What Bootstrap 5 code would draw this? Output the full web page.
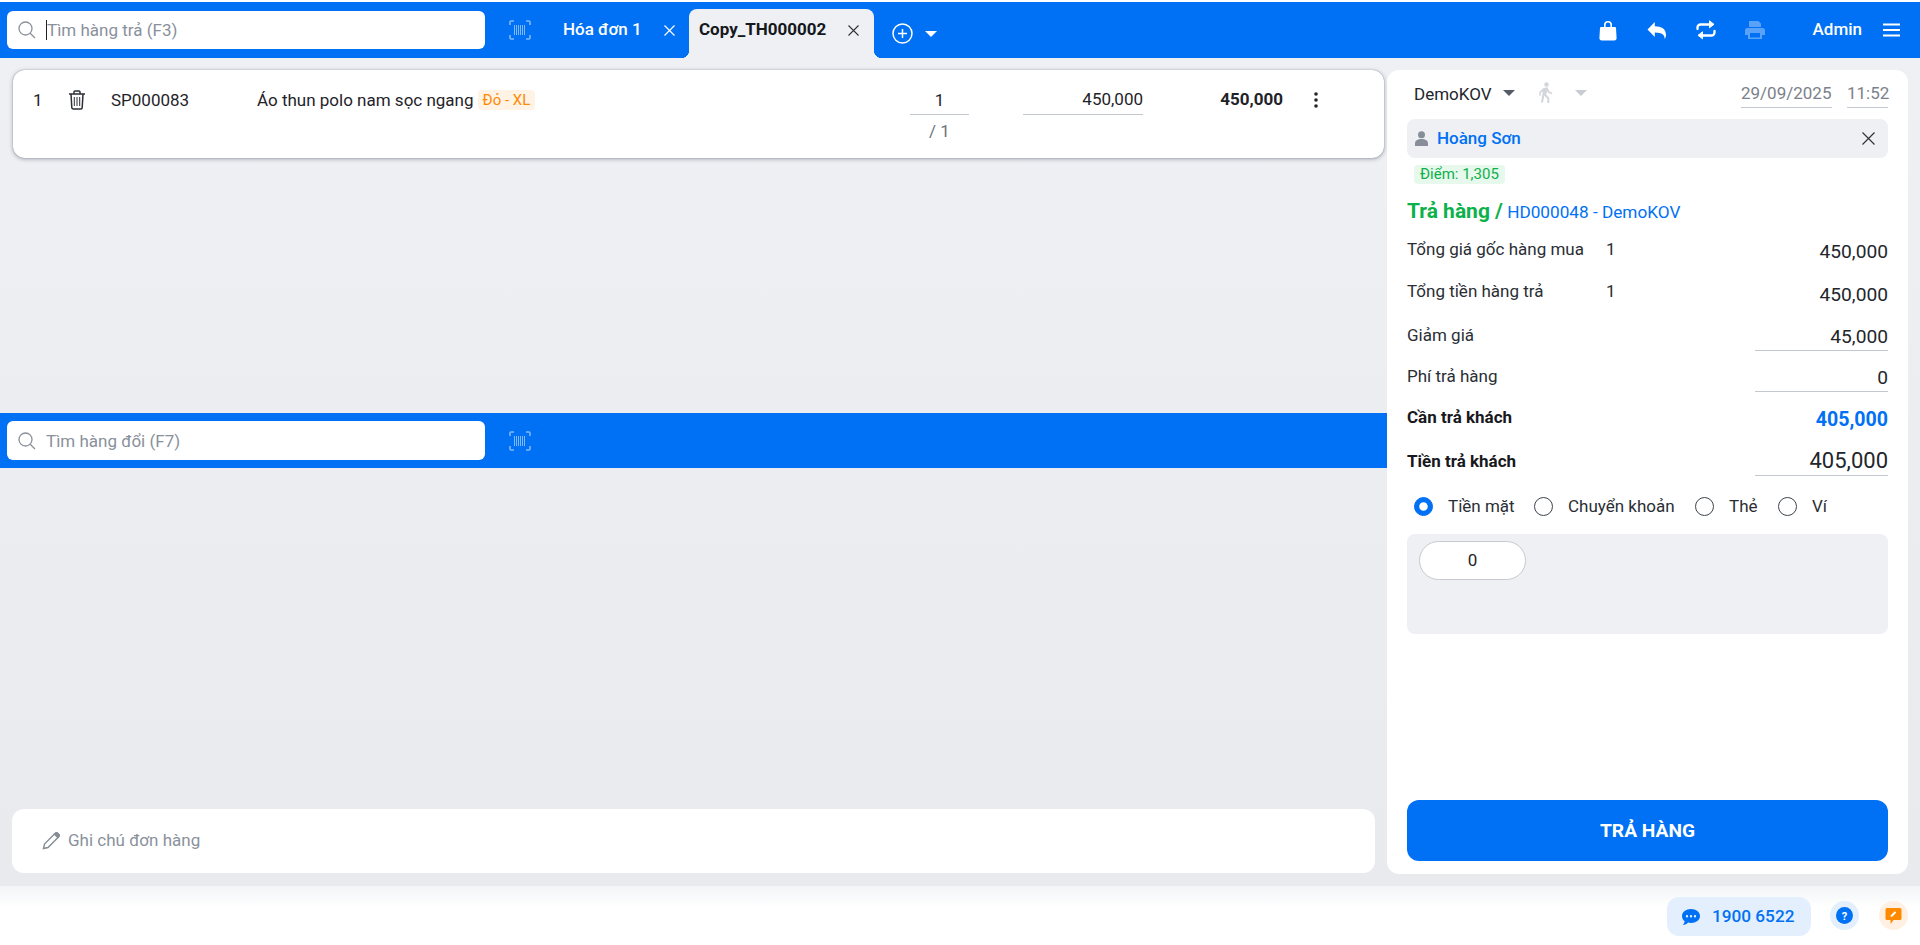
<!DOCTYPE html>
<html lang="vi">
<head>
<meta charset="utf-8">
<title>Trả hàng</title>
<link href="https://cdn.jsdelivr.net/npm/bootstrap@5.3.0/dist/css/bootstrap.min.css" rel="stylesheet">
<style>
:root{--kv-blue:#0070f4;--kv-soft:#eef0f3;--kv-line:#c3c8d0;--kv-ink:#1f2329;--kv-mute:#89909b}
html,body{height:945px;overflow:hidden}
body{font-family:Roboto,"Liberation Sans",sans-serif;font-size:17px;color:var(--kv-ink);background:#fff;padding-top:2px;display:flex;flex-direction:column}
.kv-top{height:56px;background:var(--kv-blue);flex:none;padding-left:7px}
.kv-search{width:478px;height:38px;background:#fff;border-radius:6px;padding-left:10px;color:var(--kv-mute);flex:none}
.kv-search .ph{margin-left:9px;font-size:17px;padding-top:1px}
.kv-top>.kv-search{margin-top:9px}
.kv-caret{width:1px;height:20px;background:#222;margin-left:9px}
.kv-caret+.ph{margin-left:0}
.kv-scan{margin-left:24px;flex:none;opacity:.5}
.kv-tab1{color:#fff;font-weight:500;margin-left:32px;width:126px;height:49px;margin-top:7px;line-height:41px;flex:none}
.kv-tab2{position:relative;width:185px;height:49px;margin-top:7px;background:var(--kv-soft);border-radius:8px 8px 0 0;font-weight:700;line-height:41px;padding-left:10px;flex:none;color:#15181c}
.kv-tab2::before,.kv-tab2::after{content:"";position:absolute;bottom:0;width:8px;height:8px}
.kv-tab2::before{left:-8px;background:radial-gradient(circle at 0 0,var(--kv-blue) 8px,var(--kv-soft) 8.5px)}
.kv-tab2::after{right:-8px;background:radial-gradient(circle at 100% 0,var(--kv-blue) 8px,var(--kv-soft) 8.5px)}
.kv-x{flex:none}
.kv-tab1 .kv-x{margin-left:22px}
.kv-tab2 .kv-x{margin-left:22px}
.kv-add{margin-left:18px;margin-top:7px;flex:none}
.kv-tri{width:0;height:0;border-left:6px solid transparent;border-right:6px solid transparent;border-top:6px solid #fff;flex:none}
.kv-add+.kv-tri{margin-left:12px;margin-top:7px}
.kv-tools{margin-left:auto;padding-right:20px;color:#fff}
.kv-tools svg{flex:none;display:block}
.kv-admin{font-weight:500;margin-left:48px;margin-right:21px}
.kv-gap{gap:29px}
.kv-main{height:828px;flex:none;background:linear-gradient(#eef0f3,#e8eaee)}
.kv-left{width:1387px;flex:none}
.kv-listzone{height:355px;padding:12px 3px 0 13px;flex:none}
.kv-item{height:88px;background:#fff;border-radius:12px;box-shadow:0 0 1px rgba(40,50,70,.5),0 1px 4px rgba(40,50,70,.4);position:relative;padding-top:14px;color:#1f2329}
.kv-item .c1{margin-left:20px;width:35px;flex:none;padding-top:4px}
.kv-item .c2{width:43px;flex:none;padding-top:2px}
.kv-item .c3{width:146px;flex:none;padding-top:4px}
.kv-item .c4{width:653px;flex:none;padding-top:4px}
.kv-tag{display:inline-block;background:#fff3e6;color:#ff8a00;font-size:15px;border-radius:4px;padding:0 5px;line-height:20px;margin-left:4px;vertical-align:1px}
.kv-qty{width:59px;flex:none;text-align:center;margin-right:54px}
.kv-qty .v{border-bottom:1px solid var(--kv-line);height:31px;line-height:24px;padding-top:4px}
.kv-qty .s{color:#6d737c;margin-top:5px;line-height:22px}
.kv-price{width:120px;flex:none;text-align:right;border-bottom:1px solid var(--kv-line);height:31px;line-height:24px;padding-top:3px}
.kv-total{width:140px;flex:none;text-align:right;font-weight:700;padding-top:3px}
.kv-dots{margin-left:31px;margin-top:8px;flex:none}
.kv-bar2{height:55px;background:var(--kv-blue);padding:8px 0 0 7px;flex:none}
.kv-bar2 .kv-search{height:39px}
.kv-bar2 .ph{padding-top:2px;margin-left:9px}
.kv-note{height:64px;background:#fff;border-radius:12px;margin:0 12px 13px 12px;padding-left:30px;color:#8a919c;flex:none;margin-top:auto}
.kv-note span{margin-left:8px}
.kv-panel{width:521px;height:804px;margin-top:12px;background:#fff;border-radius:12px;padding:0 20px;flex:none}
.kv-phead{height:38px;padding-top:12px}
.kv-store{margin-left:7px;color:#22262c}
.kv-tri.dk{border-top-color:#555c67;margin-left:11px}
.kv-tri.lt{border-top-color:#c8ccd2}
.kv-dt{border-bottom:1px solid var(--kv-line);color:#7b818a;height:26px;line-height:23px;white-space:nowrap}
.kv-cust{height:39px;margin-top:11px;background:var(--kv-soft);border-radius:8px;padding:0 13px 0 8px}
.kv-cust a{color:var(--kv-blue);font-weight:500;text-decoration:none;margin-left:9px}
.kv-pts{display:inline-block;background:#e7f8ec;color:#0db14b;font-size:15px;border-radius:4px;line-height:19px;padding:0 6px;margin:7px 0 0 7px;height:19px;vertical-align:top}
.kv-ptline{height:26px}
.kv-title{margin-top:15px;height:24px;line-height:24px;color:var(--kv-blue);font-size:17.2px}
.kv-title b{color:#0cb14b;font-size:21px;font-weight:700}
.kv-lines{margin-top:14px}
.kv-row{display:flex;align-items:flex-start;line-height:24px;color:#2a2e34}
.kv-row .lb{width:199px;flex:none}
.kv-row .val{margin-left:auto;font-size:19.2px;line-height:24px;padding-top:3px;color:#22262c}
.kv-row .val.low{padding-top:4px}
.kv-row .val.ln{width:133px;text-align:right;border-bottom:1px solid var(--kv-line);padding-top:2px;height:28px}
.kv-h42{height:42px}.kv-h44{height:44px}.kv-h41{height:41px}
.kv-row b{font-weight:700;color:#17191d}
.kv-row .val.blue{color:var(--kv-blue);font-weight:700;font-size:19.6px}
.kv-row .val.big{font-size:22px;padding-top:0;height:27px}
.kv-pay{height:20px;margin-top:6px;padding-left:7px;line-height:20px}
.kv-pay .form-check-input{width:19px;height:19px;margin:0;flex:none;border:1px solid #3d434b;background-color:#fff}
.kv-pay .form-check-input:checked{background-color:var(--kv-blue);border-color:var(--kv-blue)}
.kv-pay label{margin-left:15px;color:#2a2e34;white-space:nowrap}
.kv-pay .m1{width:86px}.kv-pay .m2{width:127px}.kv-pay .m3{width:49px}
.kv-box{height:100px;margin-top:18px;background:var(--kv-soft);border-radius:8px;padding:7px 12px}
.kv-pill{width:107px;height:39px;background:#fff;border:1px solid #c6cad0;border-radius:20px;text-align:center;line-height:37px}
.kv-submit{height:61px;width:100%;margin-top:166px;background:var(--kv-blue);border:0;border-radius:12px;font-weight:700;font-size:19.2px;color:#fff;padding-top:8px}
.kv-submit:hover{background:var(--kv-blue);color:#fff}
.kv-foot{height:59px;flex:none;background:linear-gradient(#f3f4f6,#fff 22px);padding:11px 12px 0 0}
.kv-hot{width:144px;height:39px;background:#e3effd;border-radius:12px;color:var(--kv-blue);font-weight:500;padding-left:15px;font-size:17.2px}
.kv-hot span{margin-left:12px}
.kv-rnd{width:29px;height:29px;border-radius:50%;flex:none}
.kv-rnd.a{background:#e3effd;margin-left:19px}
.kv-rnd.b{background:#fff0e2;margin-left:20px}
</style>
</head>
<body>
<header class="kv-top d-flex">
  <div class="kv-search d-flex align-items-center">
    <svg width="20" height="20" viewBox="0 0 20 20" fill="none" stroke="#8b929c" stroke-width="1.3"><circle cx="8.5" cy="8.5" r="6.5"/><path d="M13.2 13.2 18 18"/></svg>
    <span class="kv-caret"></span><span class="ph">Tìm hàng trả (F3)</span>
  </div>
  <svg class="kv-scan align-self-center" width="22" height="20" viewBox="0 0 22 20" fill="none" stroke="#fff" stroke-width="1.6"><path d="M1 5V2a1 1 0 0 1 1-1h3M17 1h3a1 1 0 0 1 1 1v3M21 15v3a1 1 0 0 1-1 1h-3M5 19H2a1 1 0 0 1-1-1v-3"/><path stroke-width="1" d="M5.500 5v10M7.500 5v10M9.500 5v10M11.500 5v10M13.500 5v10M15.500 5v10"/></svg>
  <div class="kv-tab1 d-flex align-items-start">Hóa đơn 1
    <svg class="kv-x" style="margin-top:16px" width="11" height="11" viewBox="0 0 11 11" stroke="#fff" stroke-width="1.200"><path d="M.5.5l10 10M10.500.5l-10 10"/></svg>
  </div>
  <div class="kv-tab2 d-flex align-items-start">Copy_TH000002
    <svg class="kv-x" style="margin-top:16px" width="11" height="11" viewBox="0 0 11 11" stroke="#333" stroke-width="1.100"><path d="M.5.500l10 10M10.500.500l-10 10"/></svg>
  </div>
  <svg class="kv-add align-self-center" width="21" height="21" viewBox="0 0 21 21" fill="none" stroke="#fff" stroke-width="1.500"><circle cx="10.500" cy="10.500" r="9.500"/><path d="M10.500 6v9M6 10.500h9"/></svg>
  <span class="kv-tri align-self-center"></span>
  <div class="kv-tools d-flex align-items-center">
    <div class="d-flex align-items-center kv-gap">
      <svg width="20" height="21" viewBox="0 0 20 21" fill="#fff"><path d="M6 7V5a4 4 0 0 1 8 0v2h-1.600V5a2.400 2.400 0 0 0-4.800 0v2z"/><path d="M3 7h14a1 1 0 0 1 1 1l.6 10a2.500 2.500 0 0 1-2.500 2.500H3.900A2.500 2.500 0 0 1 1.400 18L2 8a1 1 0 0 1 1-1z"/></svg>
      <svg width="20" height="18" viewBox="0 0 20 18" fill="#fff"><path d="M7.800 1v4.200c6.600.2 11.200 2.400 11.200 9 0 1.500-.6 2.800-1.500 3.600.5-3.700-2.400-6.300-9.700-6.400V16L.5 8.500z"/></svg>
      <svg width="20" height="20" viewBox="0 0 20 20" fill="none" stroke="#fff" stroke-width="2.300" stroke-linecap="round"><path d="M1.500 9V7.500a3 3 0 0 1 3-3h12"/><path d="M18.500 11v1.500a3 3 0 0 1-3 3h-12"/><path fill="#fff" stroke-width="1" stroke-linejoin="round" d="M13.500 1.200v6.600L17.600 4.500zM6.500 12.200v6.600L2.400 15.500z"/></svg>
      <svg width="20" height="20" viewBox="0 0 20 20" fill="#fff" opacity=".35"><path d="M4 1h9.500L16 3.500V7H4z"/><path fill-rule="evenodd" d="M2.500 8h15A2.500 2.500 0 0 1 20 10.500V15h-3v4H3v-4H0v-4.500A2.500 2.500 0 0 1 2.500 8zM5 13v4.500h10V13z"/></svg>
    </div>
    <span class="kv-admin">Admin</span>
    <svg width="17" height="14" viewBox="0 0 17 14" stroke="#fff" stroke-width="1.800"><path d="M0 1.500h17M0 7h17M0 12.500h17"/></svg>
  </div>
</header>

<main class="kv-main d-flex">
  <section class="kv-left d-flex flex-column">
    <div class="kv-listzone">
      <div class="kv-item d-flex align-items-start">
        <span class="c1">1</span>
        <span class="c2"><svg width="18" height="20" viewBox="0 0 18 20" fill="none" stroke="#2b2f36" stroke-width="1.500"><path d="M1 4h16M6 4V2a1 1 0 0 1 1-1h4a1 1 0 0 1 1 1v2"/><path d="M3 4l.8 13.500A1.500 1.500 0 0 0 5.300 19h7.400a1.500 1.500 0 0 0 1.500-1.500L15 4"/><path stroke-width="1" d="M6.300 7v9M9 7v9M11.700 7v9"/></svg></span>
        <span class="c3">SP000083</span>
        <span class="c4">Áo thun polo nam sọc ngang<span class="kv-tag">Đỏ - XL</span></span>
        <div class="kv-qty"><div class="v">1</div><div class="s">/ 1</div></div>
        <div class="kv-price">450,000</div>
        <div class="kv-total">450,000</div>
        <svg class="kv-dots" width="4" height="16" viewBox="0 0 4 16" fill="#22262c"><circle cx="2" cy="2" r="1.800"/><circle cx="2" cy="8" r="1.800"/><circle cx="2" cy="14" r="1.800"/></svg>
      </div>
    </div>
    <div class="kv-bar2 d-flex">
      <div class="kv-search d-flex align-items-center">
        <svg width="20" height="20" viewBox="0 0 20 20" fill="none" stroke="#8b929c" stroke-width="1.300"><circle cx="8.500" cy="8.500" r="6.500"/><path d="M13.200 13.200 18 18"/></svg>
        <span class="ph">Tìm hàng đổi (F7)</span>
      </div>
      <svg class="kv-scan align-self-center" style="margin-top:-8px" width="22" height="20" viewBox="0 0 22 20" fill="none" stroke="#fff" stroke-width="1.600"><path d="M1 5V2a1 1 0 0 1 1-1h3M17 1h3a1 1 0 0 1 1 1v3M21 15v3a1 1 0 0 1-1 1h-3M5 19H2a1 1 0 0 1-1-1v-3"/><path stroke-width="1" d="M5.500 5v10M7.500 5v10M9.500 5v10M11.500 5v10M13.500 5v10M15.500 5v10"/></svg>
    </div>
    <div class="kv-note d-flex align-items-center">
      <svg width="18" height="18" viewBox="0 0 18 18" fill="none" stroke="#878c94" stroke-width="1.400"><path d="M1.500 16.500l1-4.500L12.500 2l3.500 3.500-10 10z"/><path fill="#878c94" d="M12.500 2l1-1a1.500 1.500 0 0 1 2 0l1.500 1.500a1.500 1.500 0 0 1 0 2l-1 1z"/></svg>
      <span>Ghi chú đơn hàng</span>
    </div>
  </section>

  <aside class="kv-panel">
    <div class="kv-phead d-flex align-items-start">
      <span class="kv-store">DemoKOV</span>
      <span class="kv-tri dk mt-2"></span>
      <svg style="margin-left:23px" width="16" height="21" viewBox="0 0 16 21" fill="#d3d6db"><circle cx="8.500" cy="2.500" r="2.300"/><path d="M5.500 6l4-.8 2 4.300 3 1.300-.7 1.500-3.700-1.500-1-1.800-.8 3.500 3 3.500v5H9.300v-4.300L6.300 13.500 5 20.500H3l1.800-11-2 1.300v3H1.300V10z"/></svg>
      <span class="kv-tri lt mt-2" style="margin-left:21px"></span>
      <span class="kv-dt ms-auto" style="width:91px">29/09/2025</span>
      <span class="kv-dt" style="margin-left:15px;width:41px">11:52</span>
    </div>
    <div class="kv-cust d-flex align-items-center">
      <svg width="13" height="15" viewBox="0 0 13 15" fill="#878e99"><circle cx="6.500" cy="3.800" r="3.500"/><path d="M0 15v-2.500C0 9.500 2.500 8 6.500 8s6.500 1.500 6.500 4.500V15z"/></svg>
      <a href="#">Hoàng Sơn</a>
      <svg class="ms-auto" width="13" height="13" viewBox="0 0 13 13" stroke="#333" stroke-width="1.200"><path d="M.5.500l12 12M12.500.500l-12 12"/></svg>
    </div>
    <div class="kv-ptline"><span class="kv-pts">Điểm: 1,305</span></div>
    <div class="kv-title"><b>Trả hàng /</b> HD000048 - DemoKOV</div>
    <div class="kv-lines">
      <div class="kv-row kv-h42"><span class="lb">Tổng giá gốc hàng mua</span><span>1</span><span class="val">450,000</span></div>
      <div class="kv-row kv-h44"><span class="lb">Tổng tiền hàng trả</span><span>1</span><span class="val low">450,000</span></div>
      <div class="kv-row kv-h41"><span class="lb">Giảm giá</span><span class="val ln">45,000</span></div>
      <div class="kv-row kv-h41"><span class="lb">Phí trả hàng</span><span class="val ln">0</span></div>
      <div class="kv-row kv-h44"><b class="lb">Cần trả khách</b><span class="val blue">405,000</span></div>
      <div class="kv-row kv-h41"><b class="lb">Tiền trả khách</b><span class="val ln big">405,000</span></div>
    </div>
    <div class="kv-pay d-flex align-items-center">
      <input class="form-check-input" type="radio" name="pm" id="p1" checked><label class="m1" for="p1">Tiền mặt</label>
      <input class="form-check-input" type="radio" name="pm" id="p2"><label class="m2" for="p2">Chuyển khoản</label>
      <input class="form-check-input" type="radio" name="pm" id="p3"><label class="m3" for="p3">Thẻ</label>
      <input class="form-check-input" type="radio" name="pm" id="p4"><label for="p4">Ví</label>
    </div>
    <div class="kv-box"><div class="kv-pill">0</div></div>
    <button class="btn kv-submit" type="button">TRẢ HÀNG</button>
  </aside>
</main>

<footer class="kv-foot d-flex justify-content-end align-items-start">
  <div class="kv-hot d-flex align-items-center">
    <svg width="18" height="16" viewBox="0 0 18 16" fill="#0070f4"><path fill-rule="evenodd" d="M9 0c5 0 9 3 9 7s-4 7-9 7c-1 0-2-.1-3-.4C5 14.800 3 16 .8 16c1-1 1.700-2.300 1.900-3.700C1 11 0 9.100 0 7c0-4 4-7 9-7zM5 6a1.200 1.200 0 1 0 0 2.400A1.200 1.200 0 0 0 5 6zm4 0a1.200 1.200 0 1 0 0 2.400A1.200 1.200 0 0 0 9 6zm4 0a1.200 1.200 0 1 0 0 2.400A1.200 1.200 0 0 0 13 6z"/></svg>
    <span>1900 6522</span>
  </div>
  <div class="kv-rnd a d-flex align-items-center justify-content-center mt-1">
    <svg width="17" height="17" viewBox="0 0 17 17"><circle cx="8.500" cy="8.500" r="8.500" fill="#0070f4"/><text x="8.500" y="12.500" text-anchor="middle" font-family="Roboto" font-weight="700" font-size="11" fill="#fff">?</text></svg>
  </div>
  <div class="kv-rnd b d-flex align-items-center justify-content-center mt-1">
    <svg width="17" height="18" viewBox="0 0 17 18"><path fill="#ff8a00" d="M2 1h13a1.500 1.500 0 0 1 1.500 1.500v9A1.500 1.500 0 0 1 15 13H8.500l-3 4v-4H2A1.500 1.500 0 0 1 .5 11.500v-9A1.500 1.500 0 0 1 2 1z"/><path stroke="#fff" stroke-width="2" d="M6 9.500l4.500-4.500"/></svg>
  </div>
</footer>
<script src="https://cdn.jsdelivr.net/npm/bootstrap@5.3.0/dist/js/bootstrap.bundle.min.js"></script>
</body>
</html>
